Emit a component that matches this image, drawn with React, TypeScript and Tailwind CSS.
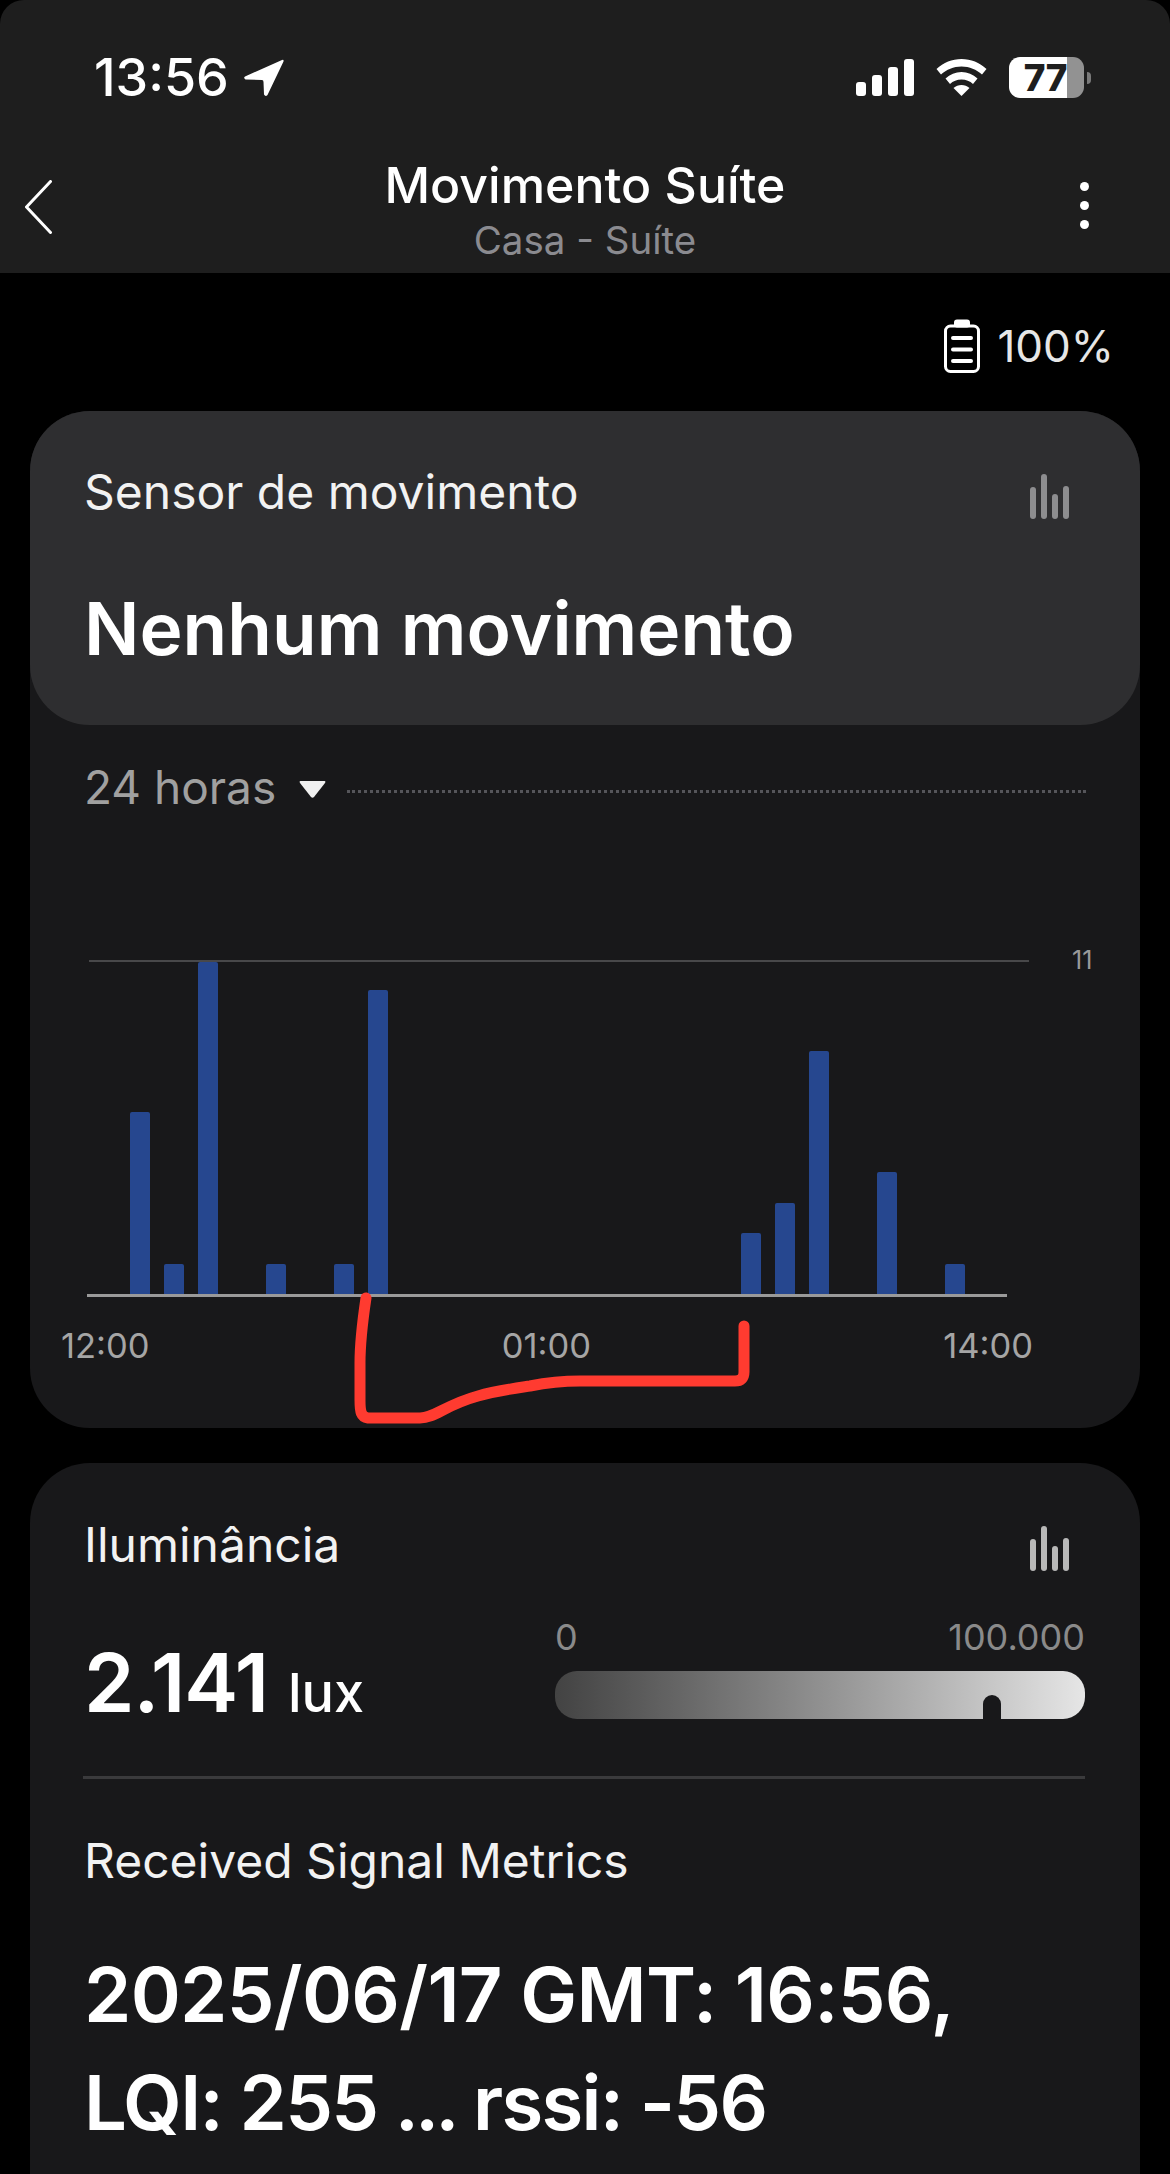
import React from 'react';

// bar values for the 24h motion chart, null = empty slot
const motionBars: (number | null)[] = [6, 1, 11, null, 1, null, 1, 10, null, null, null, null, null, null, null, null, null, null, 2, 3, 8, null, 4, null, 1];
const UNIT = 30.4;

const MiniBars = ({ className }: { className: string }) => (
  <svg viewBox="0 0 40 45" className={className} fill="currentColor">
    <rect x="0" y="13" width="6" height="32" rx="3" />
    <rect x="11" y="0" width="6" height="45" rx="3" />
    <rect x="22" y="20" width="6" height="25" rx="3" />
    <rect x="33" y="12" width="6" height="33" rx="3" />
  </svg>
);

const StatusBar = () => (
  <div className="flex h-[41px] items-center justify-between pl-[94px] pr-[79px]">
    <div className="flex items-center gap-[14px]">
      <span className="text-[52px] font-medium leading-none text-white">13:56</span>
      <svg viewBox="0 0 41 38" className="h-[38px] w-[41px]" fill="white">
        <path d="M39 1 L2 17.5 Q0 19 2.5 20.5 L19 21 Q20.5 21 20.5 23 L21 35.5 Q22.5 38 24.5 36 L40.5 2.5 Q41 0 39 1 Z" />
      </svg>
    </div>
    <div className="flex items-center">
      <div className="flex items-end gap-[6px]">
        <div className="h-[14px] w-[10px] rounded-[3px] bg-white" />
        <div className="h-[21px] w-[10px] rounded-[3px] bg-white" />
        <div className="h-[29px] w-[10px] rounded-[3px] bg-white" />
        <div className="h-[37px] w-[10px] rounded-[3px] bg-white" />
      </div>
      <svg viewBox="0 0 51 37" className="ml-[22px] h-[37px] w-[51px]" fill="white">
        <path d="M25.5 0 C16 0 7.5 3.5 0.5 10 L5 15.5 C10.5 10.5 17.5 7.5 25.5 7.5 C33.5 7.5 40.5 10.5 46 15.5 L50.5 10 C43.5 3.5 35 0 25.5 0 Z" />
        <path d="M25.5 13 C19.5 13 14 15.2 9.5 19.5 L14 25 C17 22.2 21 20.5 25.5 20.5 C30 20.5 34 22.2 37 25 L41.5 19.5 C37 15.2 31.5 13 25.5 13 Z" />
        <path d="M25.5 26 C22.5 26 19.8 27 17.5 29 L25.5 37 L33.5 29 C31.2 27 28.5 26 25.5 26 Z" />
      </svg>
      <div className="ml-[22px] flex items-center">
        <div className="flex h-[41px] w-[58px] items-center justify-end rounded-l-[11px] bg-white">
          <span className="text-[37px] font-extrabold leading-none tracking-[-0.5px] text-[#1e1e1e]">77</span>
        </div>
        <div className="h-[41px] w-[17px] rounded-r-[11px] bg-[#929292]" />
        <div className="ml-[3px] h-[12px] w-[4px] rounded-r-full bg-[#7a7a7a]" />
      </div>
    </div>
  </div>
);

const Header = () => (
  <div className="h-[273px] rounded-t-[24px] bg-[#1e1e1e] pt-[57px]">
    <StatusBar />
    <div className="mt-[59px] grid grid-cols-[1fr_auto_1fr] items-start">
      <svg viewBox="0 0 27 54" className="ml-[25px] mt-[23px] h-[54px] w-[27px]" fill="none" stroke="white" strokeWidth="3" strokeLinecap="round" strokeLinejoin="round">
        <path d="M25.5 1.5 L1.5 27 L25.5 52.5" />
      </svg>
      <div className="flex flex-col items-center">
        <div className="text-[50px] font-medium leading-[56px] text-white">Movimento Suíte</div>
        <div className="mt-[5px] text-[38.5px] leading-[44px] text-[#8b8b90]">Casa - Suíte</div>
      </div>
      <div className="mr-[81px] mt-[25px] flex flex-col items-end gap-[10px]">
        <div className="size-[9px] rounded-full bg-white" />
        <div className="size-[9px] rounded-full bg-white" />
        <div className="size-[9px] rounded-full bg-white" />
      </div>
    </div>
  </div>
);

const MotionCard = () => (
  <div className="mx-[30px] h-[1017px] rounded-[60px] bg-[#18181a]">
    <div className="h-[314px] rounded-[60px] bg-[#2e2e30] pl-[54px] pr-[70px] pt-[52px]">
      <div className="flex items-start justify-between">
        <span className="text-[48px] leading-[58px] text-[#f2f2f2]">Sensor de movimento</span>
        <MiniBars className="mt-[11px] h-[45px] w-[40px] text-[#8d8d8f]" />
      </div>
      <div className="mt-[66px] text-[73px] font-semibold leading-[84px] text-white">Nenhum movimento</div>
    </div>

    <div className="mt-[33px] flex h-[58px] items-center pl-[54px] pr-[54px]">
      <span className="text-[46px] leading-none text-[#a0a0a0]">24 horas</span>
      <svg viewBox="0 0 27 17" className="ml-[23px] mt-[4px] h-[17px] w-[27px]" fill="#f0f0f0">
        <path d="M1.5 0 H25.5 Q27 0 26 2 L15 16 Q13.5 17.5 12 16 L1 2 Q0 0 1.5 0 Z" />
      </svg>
      <div className="ml-[21px] mt-[9px] h-[3px] flex-1 border-t-[3px] border-dotted border-[#55555a]" />
    </div>

    {/* chart */}
    <div className="mt-[144px] flex items-start pl-[59px]">
      <div className="w-[940px]">
        <div className="flex h-[334px] items-end gap-[13.95px] border-t-2 border-[#48484a] pl-[41px]">
          {motionBars.map((v, i) => (
            <div
              key={i}
              className="w-[20px] rounded-t-[2px] bg-[#26478f]"
              style={{ height: v === null ? 0 : v === 11 ? 332 : v * UNIT }}
            />
          ))}
        </div>
        <div className="-ml-[2px] h-[3px] w-[920px] bg-[#9a9a9a]" />
      </div>
      <span className="-mt-[13px] ml-[43px] text-[25px] leading-[26px] text-[#9a9a9a]">11</span>
    </div>
    <div className="ml-[31px] mt-[27px] flex w-[972px] justify-between text-[34.5px] leading-[44px] text-[#a5a5a5]">
      <span>12:00</span>
      <span>01:00</span>
      <span>14:00</span>
    </div>
  </div>
);

const LightCard = () => (
  <div className="mx-[30px] mt-[35px] h-[900px] rounded-[60px] bg-[#18181a] pl-[54px] pr-[55px] pt-[53px]">
    <div className="flex items-start justify-between">
      <span className="text-[48px] leading-[58px] text-[#f2f2f2]">Iluminância</span>
      <MiniBars className="mr-[15px] mt-[10px] h-[45px] w-[40px] text-[#b8b8b8]" />
    </div>
    <div className="mt-[41px] flex items-start justify-between">
      <div className="mt-[26px] flex items-baseline">
        <span className="text-[81px] font-semibold leading-[84px] tracking-[-1px] text-white">2.141</span>
        <span className="ml-[20px] text-[54px] font-medium leading-[60px] text-white">lux</span>
      </div>
      <div className="w-[530px]">
        <div className="flex justify-between text-[36px] leading-[44px] text-[#8a8a8a]">
          <span>0</span>
          <span>100.000</span>
        </div>
        <div className="relative mt-[12px] h-[48px] rounded-[22px] bg-gradient-to-r from-[#434343] to-[#e6e6e6]">
          <div className="absolute bottom-0 left-[428px] h-[24px] w-[18px] rounded-t-full bg-[#18181a]" />
        </div>
      </div>
    </div>
    <div className="-ml-[1px] mt-[51px] h-[3px] bg-[#3a3a3c]" />
    <div className="mt-[53px] text-[48px] leading-[58px] text-[#f2f2f2]">Received Signal Metrics</div>
    <div className="mt-[50px] text-[76px] font-semibold leading-[108px] tracking-[-0.7px] text-white">
      2025/06/17 GMT: 16:56,
      <br />
      <span className="tracking-[-1.7px]">LQI: 255 <span className="tracking-[-4px]">...</span> rssi: -56</span>
    </div>
  </div>
);

export default function App() {
  return (
    <div className="relative h-[2174px] w-[1170px] overflow-hidden bg-black font-[Inter,sans-serif]">
      <Header />
      <div className="flex h-[138px] items-center justify-end gap-[17px] pr-[56px] pt-[8px]">
        <svg viewBox="0 0 36 54" className="h-[54px] w-[36px]" fill="none" stroke="white">
          <rect x="10" y="0.5" width="16" height="8" rx="3" fill="white" stroke="none" />
          <rect x="1.5" y="7" width="33" height="45.5" rx="5" strokeWidth="3" />
          <path d="M9 19 H27 M9 30.5 H27 M9 42 H27" strokeWidth="4" strokeLinecap="round" />
        </svg>
        <span className="text-[44px] leading-none text-[#e6e6e6]">100%</span>
      </div>
      <MotionCard />
      <LightCard />
      {/* hand drawn red annotation over the chart */}
      <svg viewBox="0 0 1170 2174" className="pointer-events-none absolute left-0 top-0 h-[2174px] w-[1170px]" fill="none" stroke="#ff3b30" strokeWidth="11" strokeLinecap="round" strokeLinejoin="round">
        <path d="M366 1298 C362 1325 360 1345 360 1363 L360 1400 C360 1412 361 1417 368 1418 L420 1418 C435 1418 445 1405 478 1396 C495 1391 510 1389 530 1386 C550 1382 560 1381 580 1381 L735 1381 C741 1381 744 1378 744 1372 L744 1326" />
      </svg>
    </div>
  );
}
